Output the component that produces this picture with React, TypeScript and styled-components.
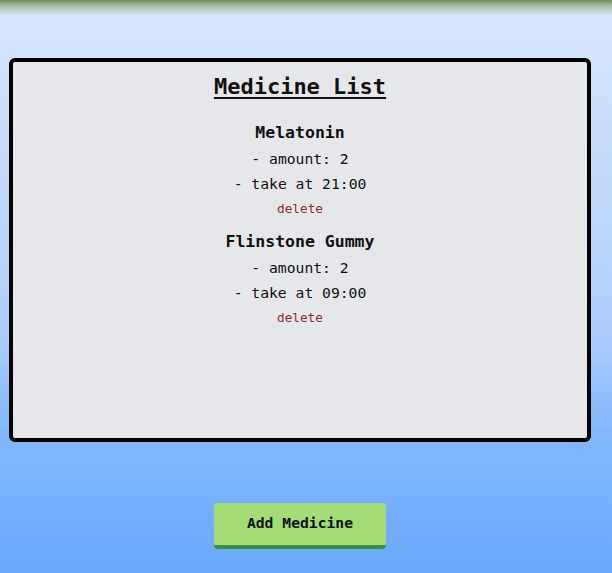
import styled, { createGlobalStyle } from 'styled-components';

const GlobalStyle = createGlobalStyle`
  html, body {
    margin: 0;
    padding: 0;
  }
  body {
    font-family: "DejaVu Sans Mono", "Liberation Mono", monospace;
    color: #111;
  }
`;

interface Medicine {
  name: string;
  amount: number;
  time: string;
}

const medicines: Medicine[] = [
  { name: 'Melatonin', amount: 2, time: '21:00' },
  { name: 'Flinstone Gummy', amount: 2, time: '09:00' },
];

function App() {
  return (
    <>
      <GlobalStyle />
      <StyledPage>
        <StyledTopShade />
        <StyledListCard>
          <StyledTitle>Medicine List</StyledTitle>
          {medicines.map((medicine) => (
            <StyledItem key={medicine.name}>
              <StyledName>{medicine.name}</StyledName>
              <StyledDetail>- amount: {medicine.amount}</StyledDetail>
              <StyledDetail>- take at {medicine.time}</StyledDetail>
              <StyledDelete>delete</StyledDelete>
            </StyledItem>
          ))}
        </StyledListCard>
        <StyledAddButton>Add Medicine</StyledAddButton>
      </StyledPage>
    </>
  );
}

const StyledPage = styled.div`
  display: flex;
  flex-direction: column;
  align-items: flex-start;
  width: 612px;
  height: 573px;
  overflow: hidden;
  background: linear-gradient(
    180deg,
    #d6e6fb 0%,
    #cfe1fb 15%,
    #a9cbfb 60%,
    #82b8fb 75%,
    #6aa8fb 100%
  );
`;

const StyledTopShade = styled.div`
  width: 100%;
  height: 16px;
  background: linear-gradient(180deg, #6c8c5c 0%, #a8bda0 35%, rgba(214, 230, 251, 0) 100%);
`;

const StyledListCard = styled.div`
  box-sizing: border-box;
  display: flex;
  flex-direction: column;
  align-items: center;
  margin: 42px 0 0 9px;
  width: 582px;
  height: 384px;
  padding-top: 10px;
  background-color: #e6e7eb;
  border: 4px solid #000;
  border-radius: 6px;
`;

const StyledTitle = styled.h1`
  margin: 0 0 18px;
  font-size: 22px;
  line-height: 30px;
  font-weight: 700;
  text-decoration: underline;
  text-underline-offset: 3px;
`;

const StyledItem = styled.div`
  display: flex;
  flex-direction: column;
  align-items: center;
  margin-bottom: 8px;
`;

const StyledName = styled.h2`
  margin: 0;
  font-size: 16.5px;
  line-height: 26px;
  font-weight: 700;
`;

const StyledDetail = styled.p`
  margin: 0;
  font-size: 14.7px;
  line-height: 25px;
`;

const StyledDelete = styled.button`
  margin: 0;
  padding: 0;
  border: none;
  background: none;
  font-family: inherit;
  font-size: 12.7px;
  line-height: 25px;
  color: #8f2b2b;
  cursor: pointer;
`;

const StyledAddButton = styled.button`
  box-sizing: border-box;
  align-self: flex-start;
  margin: 61px 0 0 214px;
  width: 172px;
  height: 46px;
  padding: 0 0 3px;
  background-color: #a3dc74;
  border: none;
  border-bottom: 4px solid #3a8a3c;
  border-radius: 4px;
  font-family: inherit;
  font-size: 14.7px;
  font-weight: 700;
  color: #111;
  cursor: pointer;
`;

export default App;
